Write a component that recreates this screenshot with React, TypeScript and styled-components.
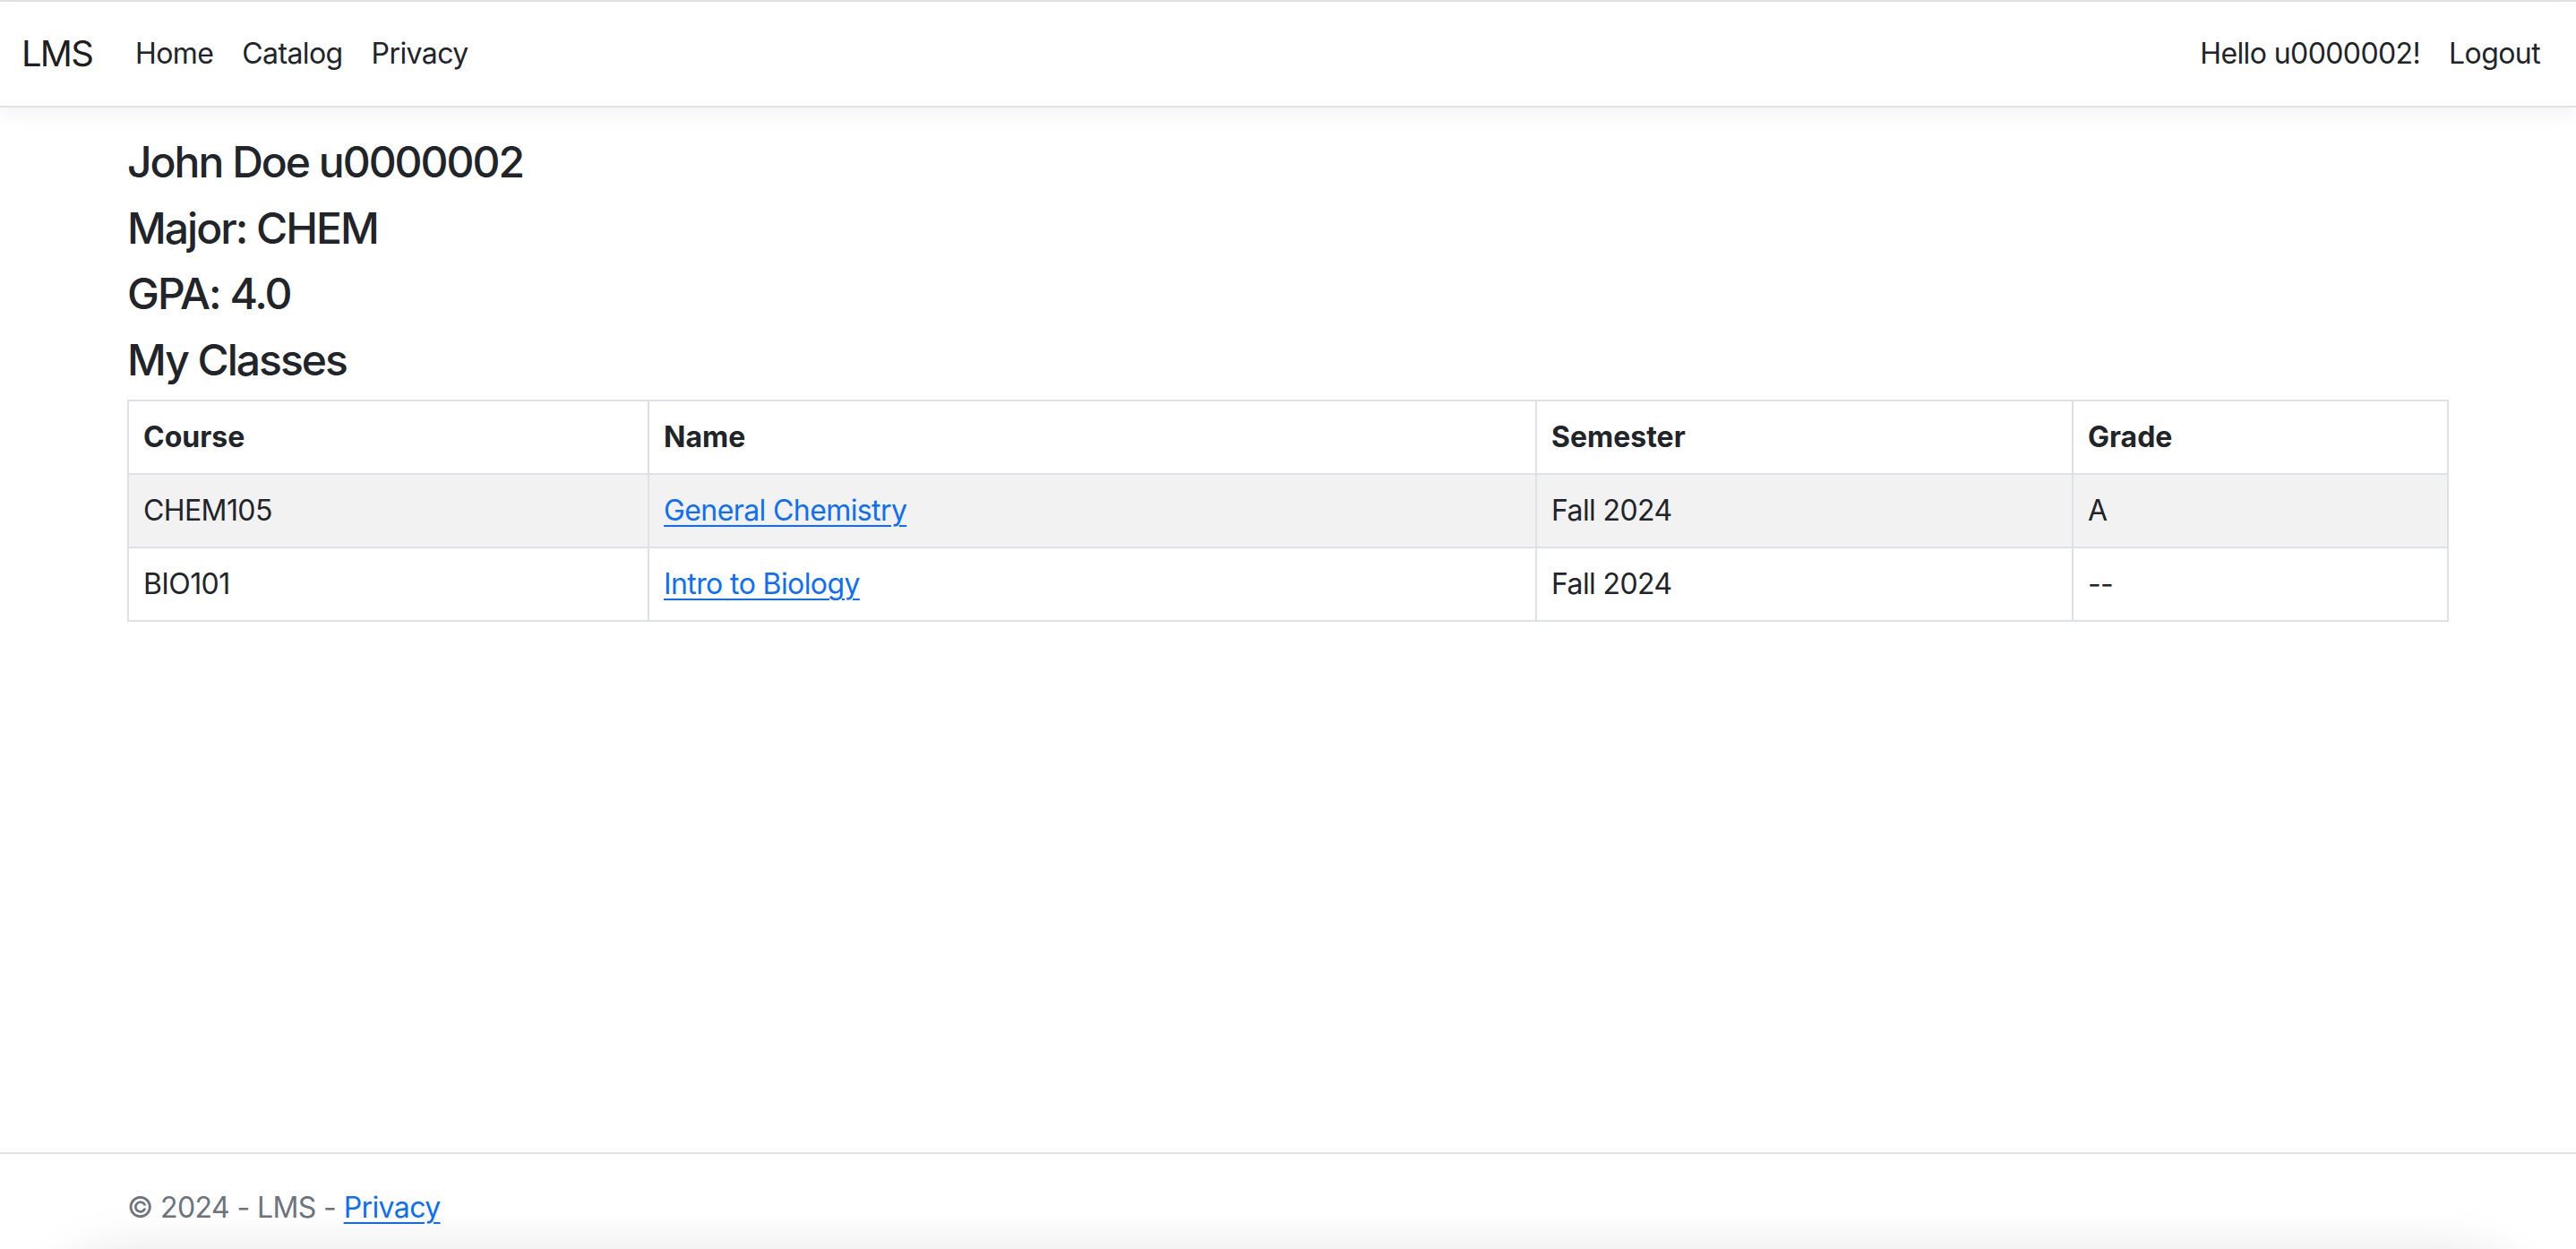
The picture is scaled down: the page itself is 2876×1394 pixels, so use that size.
import React from "react";
import styled, { createGlobalStyle } from "styled-components";

const GlobalStyle = createGlobalStyle`
  html, body {
    margin: 0;
    padding: 0;
    overflow: hidden;
    background: #fff;
  }
  body {
    font-family: Inter, "Noto Sans", "Liberation Sans", sans-serif;
    font-size: 32px;
    line-height: 1.5;
    color: #212529;
    letter-spacing: -0.6px;
  }
  * { box-sizing: border-box; }
`;

const Page = styled.div`
  height: 1408px;
  display: flex;
  flex-direction: column;
  border-top: 2px solid #e3e3e3;
`;

const Navbar = styled.header`
  display: flex;
  align-items: center;
  justify-content: space-between;
  padding: 18px 24px;
  background: #fff;
  border-bottom: 2px solid #dee2e6;
  box-shadow: 0 8px 24px rgba(0, 0, 0, 0.05);
  position: relative;
  z-index: 1;
`;

const NavGroup = styled.nav`
  display: flex;
  align-items: center;
`;

const Brand = styled.a`
  font-size: 40px;
  line-height: 60px;
  padding: 10px 0;
  margin-right: 32px;
  letter-spacing: -1.8px;
  color: rgba(0, 0, 0, 0.9);
  text-decoration: none;
`;

const NavLink = styled.a`
  display: block;
  padding: 16px;
  line-height: 48px;
  color: #212529;
  text-decoration: none;
`;

const NavText = styled.span`
  display: block;
  padding: 16px;
  line-height: 48px;
  color: #212529;
`;

const Main = styled.main`
  flex: 1 0 auto;
  padding-top: 32px;
`;

const Container = styled.div`
  max-width: 2640px;
  margin: 0 auto;
  padding: 0 24px;
`;

const Heading = styled.h4`
  margin: 0 0 16px;
  font-size: 48px;
  font-weight: 500;
  line-height: 1.2;
  letter-spacing: -2px;
`;

const Table = styled.table`
  width: 100%;
  border-collapse: collapse;
  border: 2px solid #dee2e6;
  margin-bottom: 32px;
`;

const Th = styled.th<{ $w: number }>`
  width: ${(p) => p.$w}px;
  text-align: left;
  font-weight: 700;
  letter-spacing: 0;
  padding: 16px;
  border: 2px solid #dee2e6;
  line-height: 48px;
`;

const Tr = styled.tr<{ $striped?: boolean }>`
  background: ${(p) => (p.$striped ? "#f2f2f2" : "#fff")};
`;

const Td = styled.td`
  padding: 16px;
  border: 2px solid #dee2e6;
  line-height: 48px;
`;

const Link = styled.a`
  color: #0d6efd;
  text-decoration: underline;
  text-decoration-thickness: 2px;
  text-underline-offset: 5px;
`;

const Footer = styled.footer`
  flex-shrink: 0;
  height: 122px;
  border-top: 2px solid #dee2e6;
  line-height: 120px;
  white-space: nowrap;
  color: #6c757d;
  position: relative;
  overflow: hidden;
  &::after {
    content: "";
    position: absolute;
    left: 60px;
    right: 60px;
    top: 124px;
    height: 200px;
    border-radius: 80px;
    box-shadow: 0 0 60px 14px rgba(0, 0, 0, 0.11);
  }
`;

const classes = [
  { course: "CHEM105", name: "General Chemistry", semester: "Fall 2024", grade: "A" },
  { course: "BIO101", name: "Intro to Biology", semester: "Fall 2024", grade: "--" },
];

export default function App() {
  return (
    <>
      <GlobalStyle />
      <Page>
        <Navbar>
          <NavGroup>
            <Brand href="#">LMS</Brand>
            <NavLink href="#">Home</NavLink>
            <NavLink href="#">Catalog</NavLink>
            <NavLink href="#">Privacy</NavLink>
          </NavGroup>
          <NavGroup>
            <NavText>Hello u0000002!</NavText>
            <NavLink href="#">Logout</NavLink>
          </NavGroup>
        </Navbar>
        <Main>
          <Container>
            <Heading>John Doe u0000002</Heading>
            <Heading>Major: CHEM</Heading>
            <Heading>GPA: 4.0</Heading>
            <Heading>My Classes</Heading>
            <Table>
              <thead>
                <tr>
                  <Th $w={581}>Course</Th>
                  <Th $w={991}>Name</Th>
                  <Th $w={599}>Semester</Th>
                  <Th $w={419}>Grade</Th>
                </tr>
              </thead>
              <tbody>
                {classes.map((c, i) => (
                  <Tr key={c.course} $striped={i % 2 === 0}>
                    <Td>{c.course}</Td>
                    <Td>
                      <Link href="#">{c.name}</Link>
                    </Td>
                    <Td>{c.semester}</Td>
                    <Td>{c.grade}</Td>
                  </Tr>
                ))}
              </tbody>
            </Table>
          </Container>
        </Main>
        <Footer>
          <Container>
            © 2024 - LMS - <Link href="#">Privacy</Link>
          </Container>
        </Footer>
      </Page>
    </>
  );
}
